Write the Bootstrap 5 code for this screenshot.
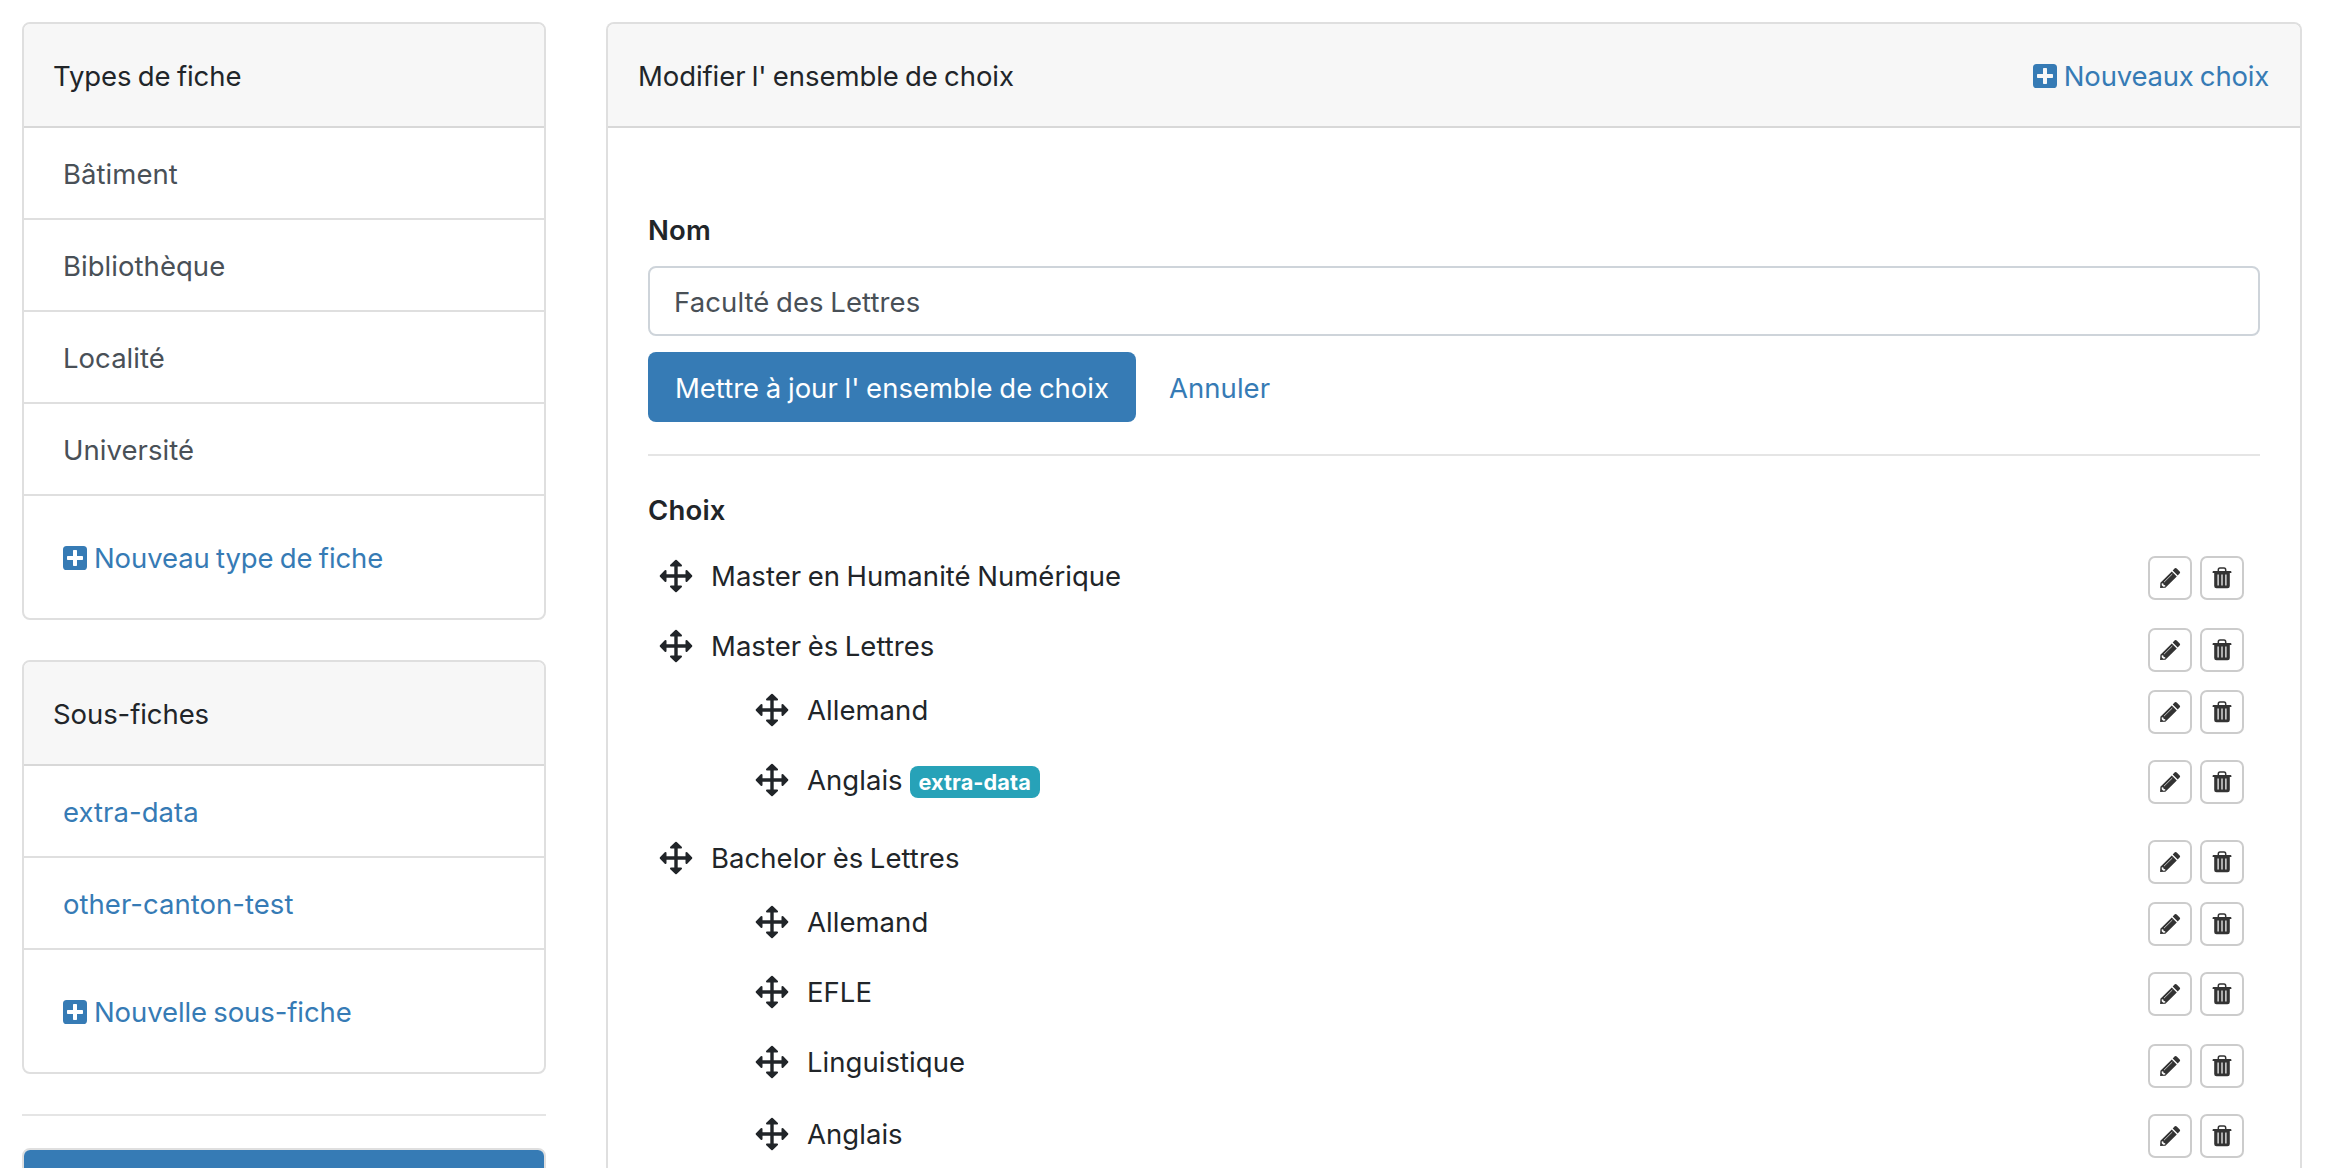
<!DOCTYPE html>
<html lang="fr">
<head>
<meta charset="utf-8">
<meta name="viewport" content="width=device-width, initial-scale=1">
<title>Modifier l'ensemble de choix</title>
<link href="https://cdn.jsdelivr.net/npm/bootstrap@5.3.0/dist/css/bootstrap.min.css" rel="stylesheet">
<style>
  body { font: 27.5px/42px Inter, "Liberation Sans", sans-serif; letter-spacing: .04px; word-spacing: -1.300px; color: #212529; background: #fff; overflow: hidden; }
  a { color: #367bb5; text-decoration: none; }
  .page { height: 1168px; padding: 22px 30px 0 22px; gap: 60px; overflow: hidden; }
  .sidebar { width: 524px; flex: none; }
  .card { border: 2px solid #dfdfdf; border-radius: 8px; }
  .card-header { height: 104px; padding: 2px 30px 0 29px; letter-spacing: -.08px; background: #f7f7f7; border-bottom: 2px solid #d8d8d8; border-radius: 6px 6px 0 0 !important; }
  .types .list-group-item { height: 92px; padding: 2px 39px 0; border: 0; border-bottom: 2px solid #dfdfdf; color: #495057; border-radius: 0; background: transparent; }
  .types .list-group-item:last-child { height: 122px; border-bottom: 0; letter-spacing: -.1px; }
  .types svg { width: 24px; height: 24px; margin-right: 7px; }
  .card.types { margin-bottom: 40px; }
  .rule { border: 0; border-top: 2px solid #e5e5e5; opacity: 1; margin: 0; }
  .primary-head { height: 104px; background: #367bb5; border-color: #367bb5; }
  .main-card > .card-header { padding-left: 30px; padding-right: 31px; }
  .new-set { letter-spacing: -.2px; }
  .main-body { padding: 81px 40px 0; }
  .field-label { font-weight: 600; letter-spacing: .2px; line-height: 42px; display: block; }
  .form-control { font: inherit; letter-spacing: .1px; word-spacing: inherit; height: 70px; padding: 2px 24px 0; border: 2px solid #ced4da; border-radius: 8px; color: #495057; margin: 15px 0 16px; }
  .btn-update { font: inherit; letter-spacing: 0; word-spacing: -1px; height: 70px; width: 488px; padding: 2px 0 0; background: #367bb5; border: 0; border-radius: 8px; color: #fff; }
  .choices, .choices ul { list-style: none; margin: 0; padding: 0; }
  .choices ul { padding-left: 96px; margin-top: 20px; }
  .choices li + li { margin-top: 26px; }
  .choices li.after-group { margin-top: 34px; }
  .choices li.last-item { margin-top: 28px; }
  .choice { height: 44px; padding: 0 16px 0 11px; }
  .handle { width: 34px; height: 34px; margin-right: 18px; flex: none; }
  .tools { gap: 8px; padding-top: 4px; }
  .group-head .tools, .lower .tools { padding-top: 8px; }
  .tool { width: 44px; height: 44px; flex: none; border: 2px solid #ccc; border-radius: 7px; background: #fff; color: #333; }
  .tool svg { width: 22px; height: 22px; }
  .tag { font-size: 21.7px; font-weight: 700; line-height: 32px; height: 32px; width: 130px; padding: 0; letter-spacing: .1px; border-radius: 8px; background: #27a2b8; color: #fff; margin: 4px 0 0 7px; }
</style>
</head>
<body>
<svg class="d-none" xmlns="http://www.w3.org/2000/svg">
  <symbol id="plus" viewBox="0 0 24 24"><path fill-rule="evenodd" fill="currentColor" d="M3.600 0H20.400A3.600 3.600 0 0 1 24 3.600V20.400A3.600 3.600 0 0 1 20.400 24H3.600A3.600 3.600 0 0 1 0 20.400V3.600A3.600 3.600 0 0 1 3.600 0ZM10.700 4a.7.7 0 0 0-.7.7V10H4.700a.7.7 0 0 0-.7.7v2.600a.7.7 0 0 0 .7.7H10v5.300a.7.7 0 0 0 .7.7h2.600a.7.7 0 0 0 .7-.7V14h5.300a.7.7 0 0 0 .7-.7v-2.600a.7.7 0 0 0-.7-.7H14V4.700a.7.7 0 0 0-.7-.7Z"/></symbol>
  <symbol id="move" viewBox="0 0 34 34"><g fill="currentColor" stroke="currentColor" stroke-linejoin="round" stroke-width="2"><path d="M17 1.700 22 6.500H12ZM17 32.300 22 27.500H12ZM1.700 17 6.500 12V22ZM32.300 17 27.500 12V22Z"/><path stroke-width="3.400" d="M17 5V29M5 17H29"/></g></symbol>
  <symbol id="pencil" viewBox="0 0 22 22"><g fill="currentColor"><path d="M15.800 1.300q1-.8 1.900.1l3 3q.9 1 .1 1.900l-2.100 2.200-5-5ZM12.800 4.400l5 5L6.400 20.700l-5.300.4.300-5.300Z"/></g><path d="M5 15.200 13.300 7" stroke="#fff" stroke-width=".7"/><path d="M2.800 16.200l1.500.2.400 1.500 1.500.3.100 1.300-2 .2-1.600-1.500Z" fill="#fff"/></symbol>
  <symbol id="trash" viewBox="0 0 22 22"><path fill="none" stroke="currentColor" stroke-width="1.500" d="M7.300 4.400V3Q7.300 1.100 9 1.100h4Q14.700 1.100 14.700 3v1.400"/><path fill="currentColor" fill-rule="evenodd" d="M2.400 4H19.600Q20.400 4 20.400 5v1H18.800V19Q18.800 21.300 16.500 21.300H5.500Q3.200 21.300 3.200 19V6H1.600V5Q1.600 4 2.400 4ZM6.500 7.500V18.500H7.700V7.500ZM10.400 7.500V18.500H11.600V7.500ZM14.300 7.500V18.500H15.500V7.500Z"/></symbol>
</svg>

<div class="page d-flex">
  <aside class="sidebar">
    <div class="card types">
      <div class="card-header d-flex align-items-center">Types de fiche</div>
      <div class="list-group list-group-flush">
        <a href="#" class="list-group-item d-flex align-items-center">Bâtiment</a>
        <a href="#" class="list-group-item d-flex align-items-center">Bibliothèque</a>
        <a href="#" class="list-group-item d-flex align-items-center">Localité</a>
        <a href="#" class="list-group-item d-flex align-items-center">Université</a>
        <div class="list-group-item d-flex align-items-center"><a href="#" class="d-flex align-items-center"><svg><use href="#plus"/></svg>Nouveau type de fiche</a></div>
      </div>
    </div>
    <div class="card types">
      <div class="card-header d-flex align-items-center">Sous-fiches</div>
      <div class="list-group list-group-flush">
        <div class="list-group-item d-flex align-items-center"><a href="#">extra-data</a></div>
        <div class="list-group-item d-flex align-items-center"><a href="#">other-canton-test</a></div>
        <div class="list-group-item d-flex align-items-center"><a href="#" class="d-flex align-items-center"><svg><use href="#plus"/></svg>Nouvelle sous-fiche</a></div>
      </div>
    </div>
    <hr class="rule">
    <div class="card" style="margin-top:32px"><div class="card-header primary-head"></div></div>
  </aside>

  <main class="flex-grow-1 d-flex">
    <div class="card main-card flex-grow-1 rounded-bottom-0 border-bottom-0">
      <div class="card-header types d-flex align-items-center justify-content-between">
        <span>Modifier l' ensemble de choix</span>
        <a href="#" class="new-set d-flex align-items-center"><svg><use href="#plus"/></svg>Nouveaux choix</a>
      </div>
      <div class="card-body main-body">
        <label class="field-label" for="nom">Nom</label>
        <input id="nom" class="form-control" type="text" value="Faculté des Lettres">
        <div class="d-flex align-items-center">
          <button class="btn btn-update" type="button">Mettre à jour l' ensemble de choix</button>
          <a href="#" style="margin-left:33px;padding-top:2px">Annuler</a>
        </div>
        <hr class="rule" style="margin:32px 0 33px">
        <div class="field-label">Choix</div>
        <ul class="choices" id="choices" style="margin-top:23px"></ul>
      </div>
    </div>
  </main>
</div>

<script src="https://cdn.jsdelivr.net/npm/bootstrap@5.3.0/dist/js/bootstrap.bundle.min.js"></script>
<script>
  const data = [
    { name: "Master en Humanité Numérique" },
    { name: "Master ès Lettres", items: [{ name: "Allemand" }, { name: "Anglais", tag: "extra-data" }] },
    { name: "Bachelor ès Lettres", cls: "after-group", items: [{ name: "Allemand" }, { name: "EFLE" }, { name: "Linguistique", cls: "lower" }, { name: "Anglais", cls: "last-item" }] }
  ];
  const render = c => `<li class="${c.cls || ""}">
    <div class="choice d-flex align-items-center ${c.items ? "group-head" : ""}">
      <svg class="handle"><use href="#move"/></svg><span>${c.name}</span>${c.tag ? `<span class="badge tag">${c.tag}</span>` : ""}
      <div class="tools d-flex ms-auto">
        <a href="#" class="tool d-flex align-items-center justify-content-center" aria-label="Modifier"><svg><use href="#pencil"/></svg></a>
        <a href="#" class="tool d-flex align-items-center justify-content-center" aria-label="Supprimer"><svg><use href="#trash"/></svg></a>
      </div>
    </div>${c.items ? `<ul>${c.items.map(render).join("")}</ul>` : ""}</li>`;
  document.getElementById("choices").innerHTML = data.map(render).join("");
</script>
</body>
</html>
